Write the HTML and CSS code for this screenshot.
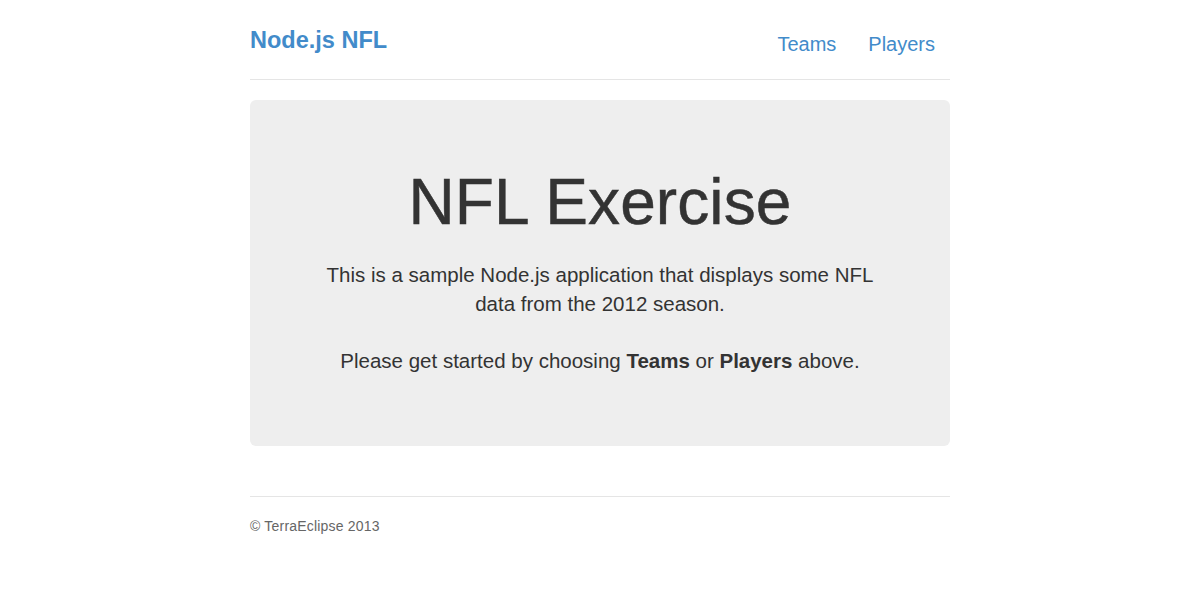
FILE: index.html
```html
<!DOCTYPE html>
<html>
<head>
<meta charset="utf-8">
<title>Node.js NFL</title>
<link rel="stylesheet" href="styles.css">
</head>
<body>
<div class="container">
  <header class="header">
    <a class="brand" href="#">Node.js NFL</a>
    <nav class="nav">
      <a href="#">Teams</a>
      <a href="#">Players</a>
    </nav>
  </header>
  <section class="jumbotron">
    <h1>NFL Exercise</h1>
    <p>This is a sample Node.js application that displays some NFL data from the 2012 season.</p>
    <p>Please get started by choosing <strong>Teams</strong> or <strong>Players</strong> above.</p>
  </section>
  <footer class="footer">© TerraEclipse 2013</footer>
</div>
</body>
</html>
```
FILE: styles.css
```css
html, body {
  margin: 0;
  padding: 0;
  background: #fff;
}
body {
  font-family: "Liberation Sans", Arial, sans-serif;
  color: #333;
  padding-top: 20px;
}
.container {
  width: 700px;
  margin: 0 auto;
}
a {
  color: #428bca;
  text-decoration: none;
}
.header {
  display: flex;
  justify-content: space-between;
  align-items: flex-start;
  height: 39px;
  padding-bottom: 20px;
  border-bottom: 1px solid #e5e5e5;
}
.brand {
  font-size: 23.5px;
  font-weight: bold;
  line-height: 40px;
}
.nav {
  display: flex;
  gap: 2px;
}
.nav a {
  font-size: 20px;
  line-height: 32px;
  padding: 8px 15px 0;
}
.jumbotron {
  margin-top: 20px;
  background: #eee;
  border-radius: 6px;
  padding: 68px 60px 71px;
  text-align: center;
}
.jumbotron h1 {
  margin: 0 0 23px;
  font-size: 64px;
  line-height: 69px;
  font-weight: normal;
  letter-spacing: 0.1px;
  -webkit-text-stroke: 0.5px #333;
}
.jumbotron p {
  margin: 0 0 28px;
  font-size: 20.5px;
  line-height: 29px;
}
.jumbotron p:last-child {
  margin-bottom: 0;
}
.footer {
  margin-top: 50px;
  border-top: 1px solid #e5e5e5;
  padding-top: 19px;
  font-size: 14px;
  line-height: 20px;
  letter-spacing: 0.2px;
  color: #666;
}
```
